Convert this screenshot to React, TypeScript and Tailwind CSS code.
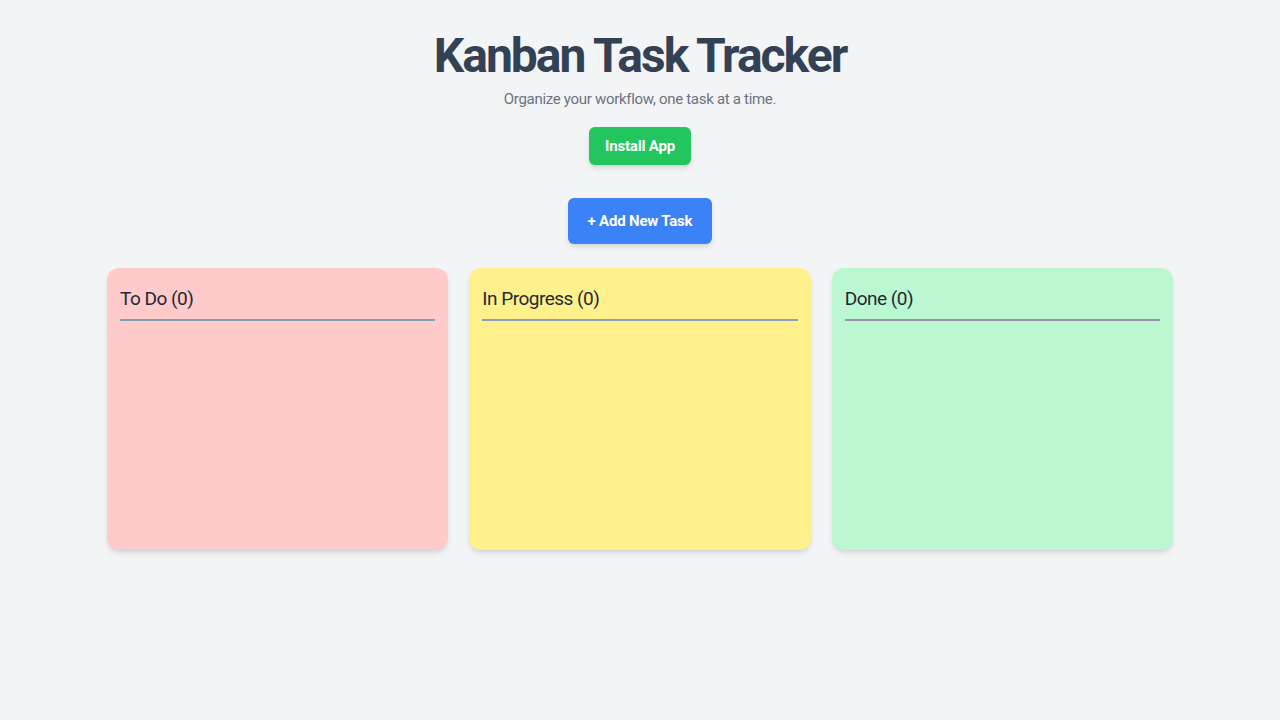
import React from 'react';

const columns = [
  { title: 'To Do', bg: 'bg-[#fecaca]', line: 'border-[#7fa3b3]' },
  { title: 'In Progress', bg: 'bg-[#fef08a]', line: 'border-[#8ea0b8]' },
  { title: 'Done', bg: 'bg-[#bbf7d0]', line: 'border-[#9a96a8]' },
];

export default function App() {
  return (
    <div className="min-h-screen w-full bg-[#f3f4f6] font-['Roboto',sans-serif]">
      <div className="flex flex-col items-center pt-[32px]">
        <h1 className="text-[48px] leading-[48px] font-bold text-[#334155] tracking-[-2px]">
          Kanban Task Tracker
        </h1>
        <p className="mt-[7px] text-[15px] leading-6 text-[#6b7280] tracking-[-0.3px]">
          Organize your workflow, one task at a time.
        </p>
        <button className="mt-4 h-[38px] w-[102px] rounded-md bg-[#22c55e] text-[15px] font-bold text-white shadow-md tracking-[-0.2px]">
          Install App
        </button>
        <button className="mt-[33px] h-[46px] w-[144px] rounded-md bg-[#3b82f6] text-[15px] font-bold text-white shadow-md tracking-[-0.2px]">
          + Add New Task
        </button>
      </div>

      <div className="mx-auto mt-6 grid w-[1066px] grid-cols-3 gap-[21px]">
        {columns.map((col) => (
          <div key={col.title} className={`h-[282px] rounded-xl ${col.bg} px-[13px] pt-[17px] shadow-md`}>
            <h2 className={`border-b-2 ${col.line} pb-1.5 text-[19px] leading-7 tracking-[-0.5px] text-[#1f2937]`}>
              {col.title} (0)
            </h2>
          </div>
        ))}
      </div>
    </div>
  );
}
